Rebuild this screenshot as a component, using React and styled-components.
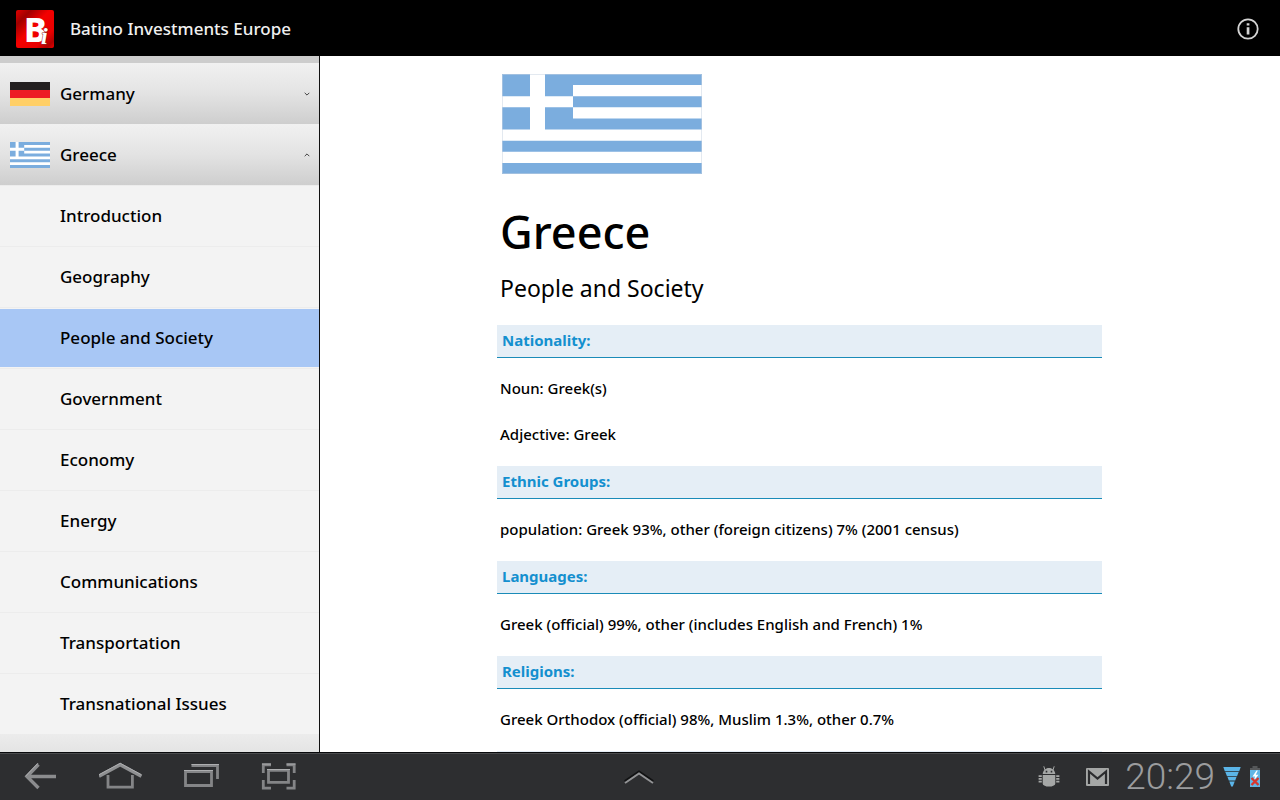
import React, { useState } from 'react';
import styled, { createGlobalStyle } from 'styled-components';

const topics = [
  'Introduction',
  'Geography',
  'People and Society',
  'Government',
  'Economy',
  'Energy',
  'Communications',
  'Transportation',
  'Transnational Issues',
];

const sections = [
  { title: 'Nationality:', lines: ['Noun: Greek(s)', 'Adjective: Greek'] },
  {
    title: 'Ethnic Groups:',
    lines: ['population: Greek 93%, other (foreign citizens) 7% (2001 census)'],
  },
  {
    title: 'Languages:',
    lines: ['Greek (official) 99%, other (includes English and French) 1%'],
  },
  {
    title: 'Religions:',
    lines: ['Greek Orthodox (official) 98%, Muslim 1.3%, other 0.7%'],
  },
];

const GreeceFlag = () => (
  <svg viewBox='0 0 200 99' preserveAspectRatio='none' aria-hidden='true'>
    <rect width='200' height='99' fill='#7badde' />
    <path
      d='M71 11H200V22H71zM71 33H200V44H71zM0 55H200V66H0zM0 77H200V88H0zM28 0H43V55H28zM0 22H71V33H0z'
      fill='#fff'
    />
  </svg>
);

const GermanyFlag = () => (
  <svg viewBox='0 0 40 24' aria-hidden='true'>
    <rect width='40' height='8' fill='#231f20' />
    <rect y='8' width='40' height='8' fill='#ed1c24' />
    <rect y='16' width='40' height='8' fill='#ffcf67' />
  </svg>
);

const Logo = () => (
  <LogoSvg width='38' height='38' viewBox='0 0 38 38' aria-hidden='true'>
    <defs>
      <linearGradient id='logoBg' x1='0' y1='0' x2='1' y2='1'>
        <stop offset='0' stopColor='#e00000' />
        <stop offset='0.2' stopColor='#a00000' />
        <stop offset='0.45' stopColor='#f40000' />
        <stop offset='0.75' stopColor='#e80000' />
        <stop offset='0.9' stopColor='#b00000' />
        <stop offset='1' stopColor='#f00000' />
      </linearGradient>
    </defs>
    <rect width='38' height='38' rx='2' fill='url(#logoBg)' />
    <LogoText x='8' y='32'>
      B
      <tspan x='25' y='34'>
        i
      </tspan>
    </LogoText>
  </LogoSvg>
);

const App = () => {
  const [selected, setSelected] = useState('People and Society');
  const [isOpen, setIsOpen] = useState(true);

  const onSelect = (e, topic) => {
    e.preventDefault();
    setSelected(topic);
  };

  return (
    <Page>
      <GlobalStyle />
      <TopBar>
        <Logo />
        <AppTitle>Batino Investments Europe</AppTitle>
        <IconButton aria-label='Info'>
          <svg width='24' height='24' viewBox='0 0 24 24'>
            <circle cx='12' cy='12' r='9.7' fill='none' stroke='#d4d4d4' strokeWidth='1.8' />
            <path d='M10.7 10.2h2.7v7.3h-2.7zM10.7 6.3h2.7v2.2h-2.7z' fill='#d4d4d4' />
          </svg>
        </IconButton>
      </TopBar>
      <Body>
        <Sidebar>
          <PreviousEdge />
          <CountryButton>
            <SmallFlag height={24}>
              <GermanyFlag />
            </SmallFlag>
            <span>Germany</span>
            <Chevron />
          </CountryButton>
          <CountryButton
            aria-expanded={isOpen}
            onClick={() => setIsOpen((prev) => !prev)}
          >
            <SmallFlag height={26}>
              <GreeceFlag />
            </SmallFlag>
            <span>Greece</span>
            <Chevron up={isOpen} />
          </CountryButton>
          {isOpen && (
            <TopicList>
              {topics.map((topic) => (
                <li key={topic}>
                  <TopicLink
                    href='#topic'
                    $selected={topic === selected}
                    onClick={(e) => onSelect(e, topic)}
                  >
                    {topic}
                  </TopicLink>
                </li>
              ))}
            </TopicList>
          )}
          <NextEdge />
        </Sidebar>
        <Main>
          <Article>
            <LargeFlag>
              <GreeceFlag />
            </LargeFlag>
            <CountryName>Greece</CountryName>
            <TopicName>{selected}</TopicName>
            {sections.map(({ title, lines }) => (
              <Section key={title}>
                <SectionTitle>{title}</SectionTitle>
                <SectionText>
                  {lines.map((line) => (
                    <p key={line}>{line}</p>
                  ))}
                </SectionText>
              </Section>
            ))}
            <SectionTitle as='div' />
          </Article>
        </Main>
      </Body>
      <SystemBar>
        <NavGroup>
          <NavButton aria-label='Back'>
            <svg width='44' height='32' viewBox='0 0 44 32'>
              <path d='M18.5 3.5L7 15.5L18.5 27M8 15.5H36' fill='none' stroke='#8b8c8e' strokeWidth='3.4' />
              <path d='M18 2.2L5.5 15.2' fill='none' stroke='#b0b1b3' strokeWidth='1' />
            </svg>
          </NavButton>
          <NavButton aria-label='Home'>
            <svg width='44' height='32' viewBox='0 0 44 32'>
              <path d='M9 14V26.2H33.4V14' fill='none' stroke='#848587' strokeWidth='2.8' />
              <path d='M0 15.2L21.2 3.8L42.4 15.2' fill='none' stroke='#8f9092' strokeWidth='3.4' />
              <path d='M0 13.7L21.2 2.3L42.4 13.7' fill='none' stroke='#adaeb0' strokeWidth='1' />
            </svg>
          </NavButton>
          <NavButton aria-label='Recent apps'>
            <svg width='44' height='32' viewBox='0 0 44 32'>
              <path d='M7.5 10.5H33.5V24.5H7.5zM13.5 4.5H39.5V18' fill='none' stroke='#848587' strokeWidth='2.8' />
              <path d='M6 9.5H35M13.5 3.5H41' fill='none' stroke='#adaeb0' strokeWidth='1' />
            </svg>
          </NavButton>
          <NavButton aria-label='Screenshot'>
            <svg width='44' height='32' viewBox='0 0 44 32'>
              <path
                d='M11.5 9.3H31.5V21.3H11.5zM6.3 12V3.9H14M29.5 3.9H37.2V12M6.3 19V27.1H14M29.5 27.1H37.2V19'
                fill='none'
                stroke='#848587'
                strokeWidth='2.8'
              />
              <path d='M10 8.5H33M5 3H14M29.5 3H38.5' fill='none' stroke='#adaeb0' strokeWidth='1' />
            </svg>
          </NavButton>
        </NavGroup>
        <NavButton aria-label='Open tray'>
          <svg width='44' height='32' viewBox='0 0 44 32'>
            <path d='M7 20.5L21 11L35 20.5' fill='none' stroke='#111213' strokeWidth='3' />
            <path d='M7 22L21 12.5L35 22' fill='none' stroke='#939496' strokeWidth='2' />
          </svg>
        </NavButton>
        <StatusGroup>
          <svg width='22' height='22' viewBox='0 0 22 22' aria-hidden='true'>
            <path
              d='M7 4L5.8 .3M15 4L16.2 .3'
              stroke='#a5a7a6'
              strokeWidth='1'
              fill='none'
            />
            <path
              d='M4.7 8C4.9 4.6 7.6 2 11 2s6.1 2.6 6.3 6zM4.7 9H17.3V17.5Q17.3 19 15.8 19.5L13.5 20.5H8.5L6.2 19.5Q4.7 19 4.7 17.5zM.6 9.2H3.8V11H.6zM.6 12H3.8V13.8H.6zM.6 14.8H3.8V16.6H.6zM18.2 9.2H21.4V11H18.2zM18.2 12H21.4V13.8H18.2zM18.2 14.8H21.4V16.6H18.2z'
              fill='#a5a7a6'
            />
            <path d='M7.7 4.8H9.3V6.4H7.7zM12.7 4.8H14.3V6.4H12.7z' fill='#2d2e30' />
          </svg>
          <MailIcon width='23' height='18' viewBox='0 0 23 18' aria-hidden='true'>
            <rect width='23' height='18' rx='1' fill='#a5a7a6' />
            <path d='M3 16V3.5L11.5 10.5L20 3.5V16' fill='none' stroke='#2b2c2e' strokeWidth='2.2' />
          </MailIcon>
          <Clock>20:29</Clock>
          <svg width='18' height='20' viewBox='0 0 18 20' aria-hidden='true'>
            <path
              d='M.3 0H17.7L16.2 4.2H1.8zM2.3 5H15.7L14 9.2H4zM4.5 10H13.5L12.2 13.6H5.8zM6.3 14.4H11.7L9.8 19.5H8.2z'
              fill='#5bb5e8'
            />
          </svg>
          <BatteryIcon width='10' height='22' viewBox='0 0 10 22' aria-hidden='true'>
            <path d='M2.5 0H7.5V2H10V5H0V2H2.5z' fill='#56585a' />
            <rect y='4' width='10' height='17' fill='#62b6e6' />
            <path d='M6.5 4.5L2.5 10.5H5L4 14.5L8.5 8.8H5.8L7.8 4.5z' fill='#fff' />
            <path d='M1.5 12L8.5 19M8.5 12L1.5 19' stroke='#d8362e' strokeWidth='2.4' />
          </BatteryIcon>
        </StatusGroup>
      </SystemBar>
    </Page>
  );
};

const Chevron = ({ up }) => (
  <ChevronIcon width='6' height='4' viewBox='0 0 6 4' aria-hidden='true'>
    <path d={up ? 'M.7 3.2L3 .9L5.3 3.2' : 'M.7 .8L3 3.1L5.3 .8'} fill='none' stroke='#444' />
  </ChevronIcon>
);

const GlobalStyle = createGlobalStyle`
  * {
    box-sizing: border-box;
  }
  body {
    margin: 0;
    background: #fff;
    color: #000;
    font-family: 'Noto Sans', sans-serif;
    font-weight: 500;
  }
  button {
    padding: 0;
    border: none;
    background: none;
    color: inherit;
    font: inherit;
    cursor: pointer;
  }
  h1, h2, h3, p, ul {
    margin: 0;
    padding: 0;
    font-weight: 500;
  }
`;
const Page = styled.div`
  display: flex;
  flex-direction: column;
  height: 100vh;
  overflow: hidden;
`;
const TopBar = styled.header`
  display: flex;
  flex: none;
  align-items: center;
  gap: 16px;
  height: 56px;
  padding: 2px 20px 0 16px;
  background: #000;
  color: #f0f0f0;
`;
const LogoSvg = styled.svg`
  overflow: visible;
`;
const LogoText = styled.text`
  font-size: 34px;
  font-weight: 800;
  fill: #fff;
  & > tspan {
    font-family: 'Liberation Serif', serif;
    font-size: 24px;
    font-style: italic;
    font-weight: 700;
    stroke: #8a3030;
    stroke-width: 1px;
    paint-order: stroke;
  }
`;
const AppTitle = styled.div`
  flex: 1;
  font-size: 17px;
  line-height: 24px;
`;
const IconButton = styled.button`
  display: flex;
`;
const Body = styled.div`
  display: flex;
  flex: 1;
  min-height: 0;
`;
const Sidebar = styled.nav`
  flex: none;
  width: 320px;
  overflow: hidden;
  background: #f3f3f3;
  border-right: 1px solid #111;
  font-size: 17px;
`;
const PreviousEdge = styled.div`
  height: 7px;
  background: #cdcdcd;
`;
const NextEdge = styled.div`
  height: 61px;
  background: linear-gradient(#ececec, #d0d0d0);
`;
const CountryButton = styled.button`
  display: flex;
  align-items: center;
  gap: 10px;
  width: 100%;
  height: 61px;
  padding: 0 9px 0 10px;
  background: linear-gradient(#f1f1f1, #e3e3e3 50%, #cecece);
  text-align: left;
`;
const SmallFlag = styled.span`
  width: 40px;
  height: ${({ height }) => height}px;
  & > svg {
    display: block;
    width: 100%;
    height: 100%;
  }
`;
const ChevronIcon = styled.svg`
  margin-left: auto;
`;
const TopicList = styled.ul`
  list-style: none;
`;
const TopicLink = styled.a`
  display: flex;
  align-items: center;
  height: 61px;
  padding-left: 60px;
  border-top: 1px solid #ececec;
  border-bottom: 1px solid #f3f3f3;
  background: ${({ $selected }) => ($selected ? '#a8c7f5' : '#f3f3f3')};
  box-shadow: inset 0 1px #f3f3f3;
  color: inherit;
  text-decoration: none;
`;
const Main = styled.main`
  flex: 1;
  min-width: 0;
  padding: 18px 1px 0 0;
  overflow: hidden;
`;
const Article = styled.article`
  max-width: 605px;
  margin: 0 auto;
`;
const LargeFlag = styled.div`
  width: 200px;
  height: 100px;
  margin-left: 5px;
  & > svg {
    display: block;
    width: 100%;
    height: 100%;
    outline: 1px solid #c8d4e280;
    outline-offset: -1px;
  }
`;
const CountryName = styled.h1`
  margin-top: 26px;
  padding-left: 3px;
  font-size: 45px;
  line-height: 64px;
`;
const TopicName = styled.h2`
  margin: 8px 0 20px;
  padding-left: 3px;
  font-size: 23px;
  font-weight: 400;
  line-height: 33px;
`;
const Section = styled.section`
  display: flex;
  flex-direction: column;
`;
const SectionTitle = styled.h3`
  height: 33px;
  padding: 4px 5px;
  background: #e5eef6;
  border-bottom: 1px solid #1a8bb8;
  color: #1490cf;
  font-size: 15px;
  font-weight: 700;
  line-height: 22px;
`;
const SectionText = styled.div`
  display: flex;
  flex-direction: column;
  gap: 24px;
  padding: 19px 3px 21px;
  font-size: 15px;
  line-height: 22px;
`;
const SystemBar = styled.footer`
  display: grid;
  flex: none;
  grid-template-columns: 1fr auto 1fr;
  align-items: center;
  height: 48px;
  border-top: 1px solid #08090b;
  background: #2d2e30;
  box-shadow: inset 0 1px #4a4b4d;
`;
const NavGroup = styled.div`
  display: flex;
  gap: 35px;
  padding-left: 20px;
`;
const NavButton = styled.button`
  display: flex;
`;
const StatusGroup = styled.div`
  display: flex;
  align-items: center;
  justify-content: flex-end;
  padding-right: 20px;
`;
const MailIcon = styled.svg`
  margin: 0 16px 0 26px;
`;
const Clock = styled.time`
  margin-right: 8px;
  color: #9b9c9e;
  font-family: Roboto, sans-serif;
  font-size: 37px;
  font-weight: 300;
  line-height: 46px;
`;
const BatteryIcon = styled.svg`
  margin-left: 9px;
`;

export default App;
